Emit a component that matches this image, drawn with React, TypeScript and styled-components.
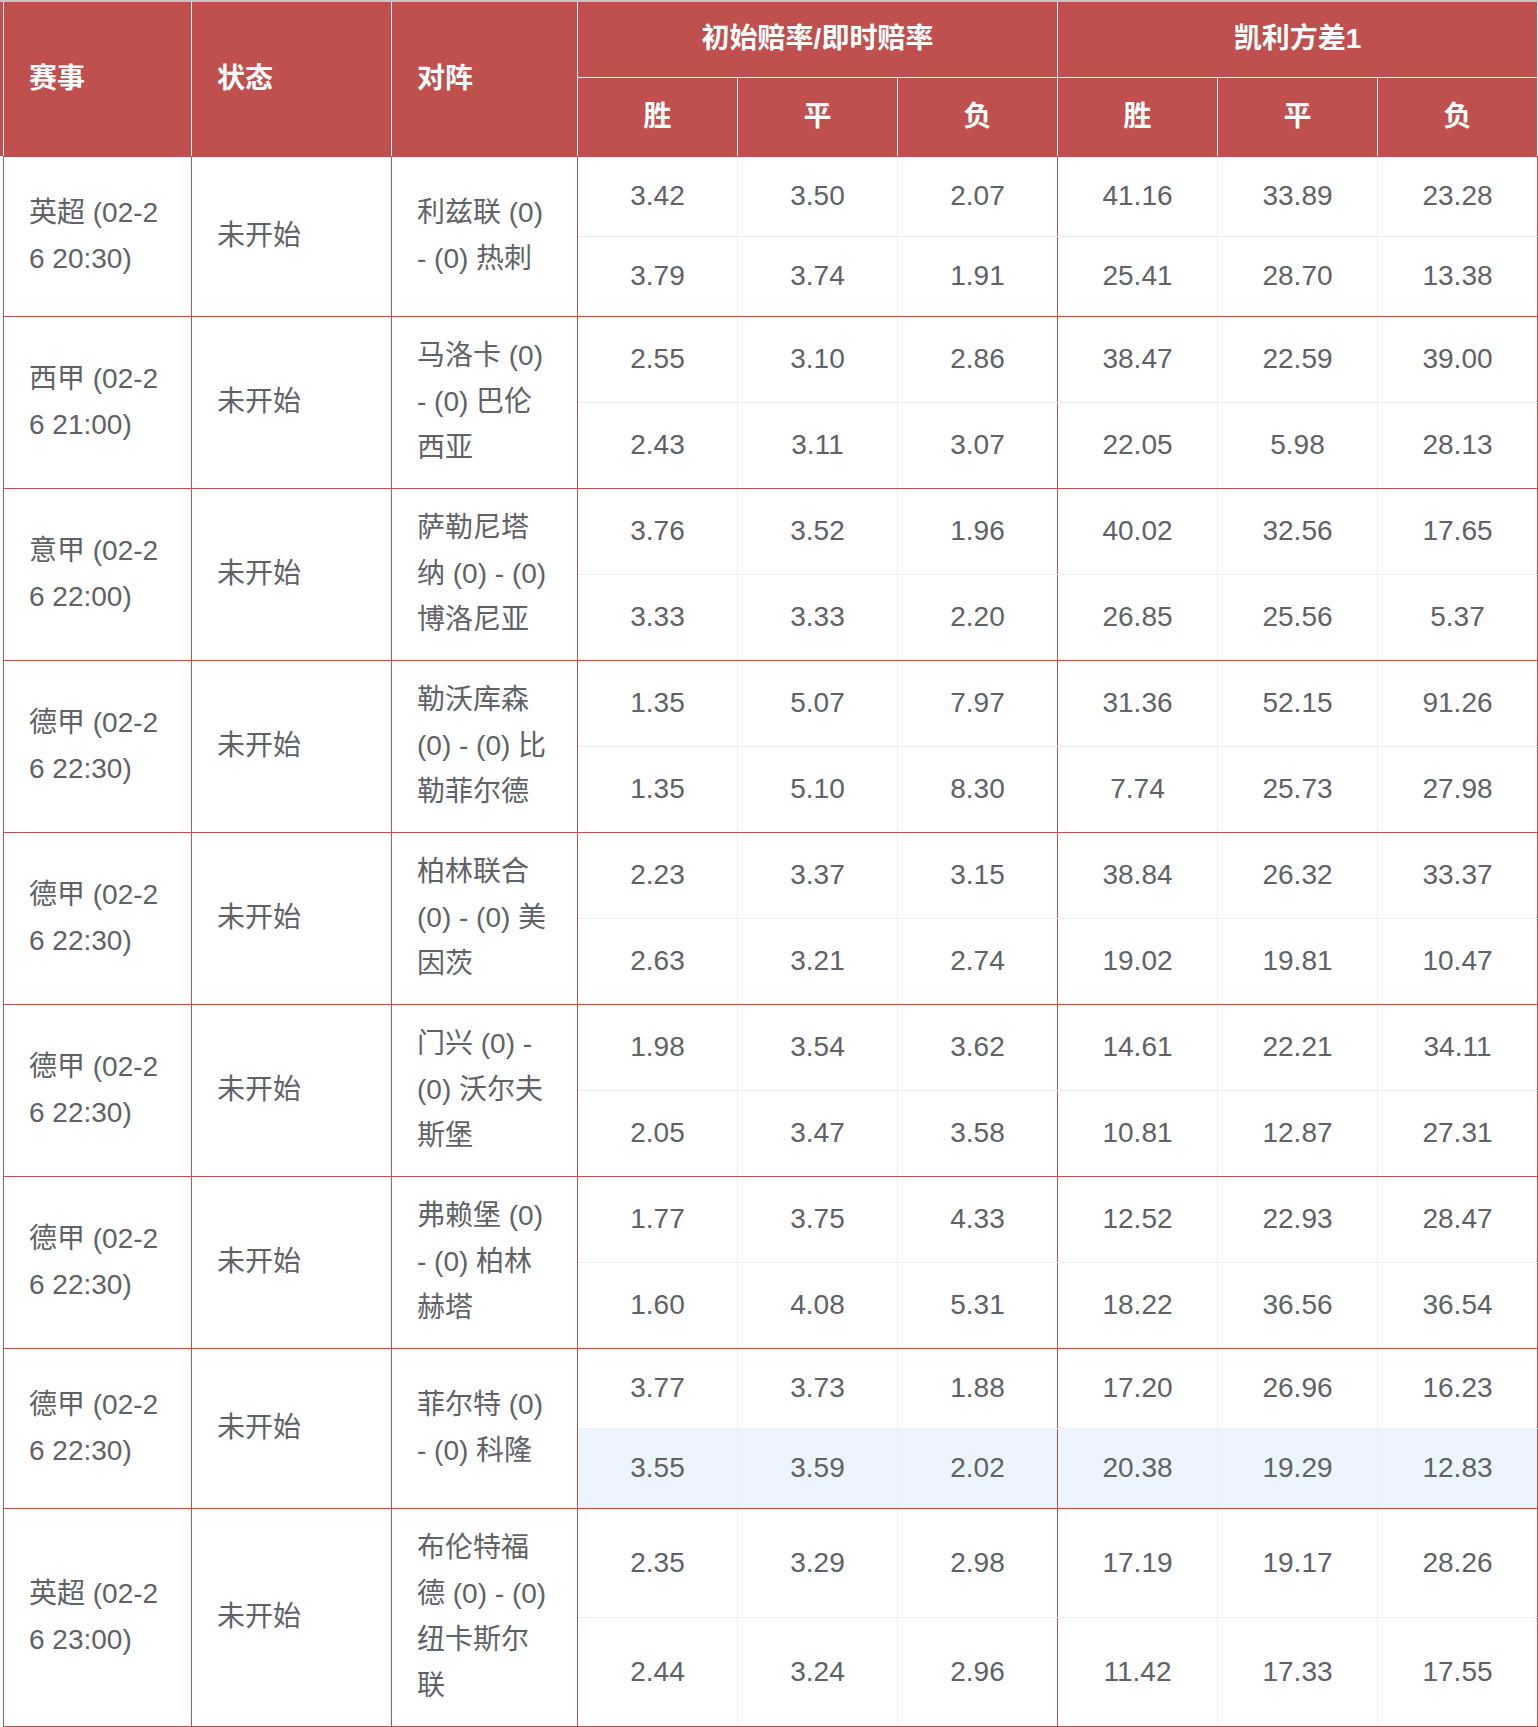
import styled, { createGlobalStyle } from "styled-components";

const RED = "#c0504d";
const LINE = "#ebeef5";

const GlobalStyle = createGlobalStyle`
  body {
    margin: 0;
    background: #fff;
    font-family: "Liberation Sans", Arial, "Noto Sans CJK SC", sans-serif;
  }
`;

const Wrap = styled.div`
  padding-left: 3px;
  border-top: 2px solid #c3c8c2;
  background: linear-gradient(${RED}, ${RED}) no-repeat 0 0 / 3px 154px;
`;

const Table = styled.table`
  width: 1534px;
  border-collapse: collapse;
  table-layout: fixed;
  font-size: 28px;
  line-height: 46px;
  color: #606266;
`;

const HeadRow = styled.tr<{ $h: number }>`
  height: ${({ $h }) => $h}px;
`;

const HeadCell = styled.th<{ $left?: boolean; $bottom?: boolean }>`
  background: ${RED};
  color: #fff;
  font-weight: 700;
  padding: 0 ${({ $left }) => ($left ? "0 0 25px" : "0")};
  text-align: ${({ $left }) => ($left ? "left" : "center")};
  border: 1px solid #fff;
  border-top: none;
  border-bottom: 1px solid ${({ $bottom }) => ($bottom ? RED : "#fff")};
  vertical-align: middle;
`;

const InfoCell = styled.td`
  padding: 16.5px 28px 16.5px 25px;
  border: 1px solid ${RED};
  word-break: break-all;
  vertical-align: middle;
  text-align: left;
`;

const OddsCell = styled.td<{ $split?: boolean; $last?: boolean; $hl?: boolean; $edge?: boolean }>`
  padding: 16.5px 0;
  text-align: center;
  vertical-align: middle;
  background: ${({ $hl }) => ($hl ? "#ecf5ff" : "transparent")};
  border-left: 1px solid ${({ $split }) => ($split ? RED : LINE)};
  border-right: 1px solid ${({ $edge }) => ($edge ? RED : LINE)};
  border-bottom: 1px solid ${({ $last }) => ($last ? RED : LINE)};
`;

type Match = {
  league: string;
  team: string;
  odds: [string[], string[]];
};

const matches: Match[] = [
  {
    league: "英超 (02-26 20:30)",
    team: "利兹联 (0) - (0) 热刺",
    odds: [
      ["3.42", "3.50", "2.07", "41.16", "33.89", "23.28"],
      ["3.79", "3.74", "1.91", "25.41", "28.70", "13.38"],
    ],
  },
  {
    league: "西甲 (02-26 21:00)",
    team: "马洛卡 (0) - (0) 巴伦西亚",
    odds: [
      ["2.55", "3.10", "2.86", "38.47", "22.59", "39.00"],
      ["2.43", "3.11", "3.07", "22.05", "5.98", "28.13"],
    ],
  },
  {
    league: "意甲 (02-26 22:00)",
    team: "萨勒尼塔纳 (0) - (0) 博洛尼亚",
    odds: [
      ["3.76", "3.52", "1.96", "40.02", "32.56", "17.65"],
      ["3.33", "3.33", "2.20", "26.85", "25.56", "5.37"],
    ],
  },
  {
    league: "德甲 (02-26 22:30)",
    team: "勒沃库森 (0) - (0) 比勒菲尔德",
    odds: [
      ["1.35", "5.07", "7.97", "31.36", "52.15", "91.26"],
      ["1.35", "5.10", "8.30", "7.74", "25.73", "27.98"],
    ],
  },
  {
    league: "德甲 (02-26 22:30)",
    team: "柏林联合 (0) - (0) 美因茨",
    odds: [
      ["2.23", "3.37", "3.15", "38.84", "26.32", "33.37"],
      ["2.63", "3.21", "2.74", "19.02", "19.81", "10.47"],
    ],
  },
  {
    league: "德甲 (02-26 22:30)",
    team: "门兴 (0) - (0) 沃尔夫斯堡",
    odds: [
      ["1.98", "3.54", "3.62", "14.61", "22.21", "34.11"],
      ["2.05", "3.47", "3.58", "10.81", "12.87", "27.31"],
    ],
  },
  {
    league: "德甲 (02-26 22:30)",
    team: "弗赖堡 (0) - (0) 柏林赫塔",
    odds: [
      ["1.77", "3.75", "4.33", "12.52", "22.93", "28.47"],
      ["1.60", "4.08", "5.31", "18.22", "36.56", "36.54"],
    ],
  },
  {
    league: "德甲 (02-26 22:30)",
    team: "菲尔特 (0) - (0) 科隆",
    odds: [
      ["3.77", "3.73", "1.88", "17.20", "26.96", "16.23"],
      ["3.55", "3.59", "2.02", "20.38", "19.29", "12.83"],
    ],
  },
  {
    league: "英超 (02-26 23:00)",
    team: "布伦特福德 (0) - (0) 纽卡斯尔联",
    odds: [
      ["2.35", "3.29", "2.98", "17.19", "19.17", "28.26"],
      ["2.44", "3.24", "2.96", "11.42", "17.33", "17.55"],
    ],
  },
];

// row index 7, second line is the selected one
const HIGHLIGHT = { group: 7, line: 1 };

const sub = ["胜", "平", "负", "胜", "平", "负"];

export default function App() {
  return (
    <Wrap>
      <GlobalStyle />
      <Table>
        <colgroup>
          <col style={{ width: 188 }} />
          <col style={{ width: 200 }} />
          <col style={{ width: 186 }} />
          {sub.map((_, i) => (
            <col key={i} style={{ width: 160 }} />
          ))}
        </colgroup>
        <thead>
          <HeadRow $h={75}>
            <HeadCell $left $bottom rowSpan={2}>赛事</HeadCell>
            <HeadCell $left $bottom rowSpan={2}>状态</HeadCell>
            <HeadCell $left $bottom rowSpan={2}>对阵</HeadCell>
            <HeadCell colSpan={3}>初始赔率/即时赔率</HeadCell>
            <HeadCell colSpan={3}>凯利方差1</HeadCell>
          </HeadRow>
          <HeadRow $h={79}>
            {sub.map((s, i) => (
              <HeadCell key={i} $bottom>
                {s}
              </HeadCell>
            ))}
          </HeadRow>
        </thead>
        <tbody>
          {matches.map((m, g) =>
            m.odds.map((line, l) => (
              <tr key={`${g}-${l}`}>
                {l === 0 && (
                  <>
                    <InfoCell rowSpan={2}>{m.league}</InfoCell>
                    <InfoCell rowSpan={2}>未开始</InfoCell>
                    <InfoCell rowSpan={2}>{m.team}</InfoCell>
                  </>
                )}
                {line.map((v, i) => (
                  <OddsCell
                    key={i}
                    $split={i === 0 || i === 3}
                    $edge={i === 2 || i === 5}
                    $last={l === 1}
                    $hl={g === HIGHLIGHT.group && l === HIGHLIGHT.line}
                  >
                    {v}
                  </OddsCell>
                ))}
              </tr>
            ))
          )}
        </tbody>
      </Table>
    </Wrap>
  );
}
